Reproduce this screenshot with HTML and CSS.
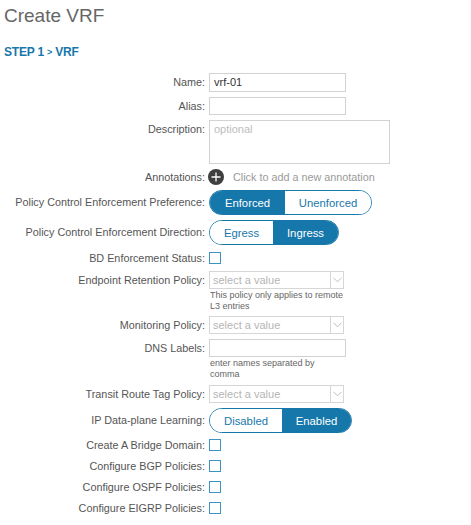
FILE: index.html
```html
<!DOCTYPE html>
<html>
<head>
<meta charset="utf-8">
<link rel="stylesheet" href="styles.css">
</head>
<body>
<div class="page">
  <h1 class="title">Create VRF</h1>
  <div class="step">STEP 1 <span class="sep">&gt;</span> VRF</div>
  <div class="form">
    <div class="row">
      <div class="label h19">Name:</div>
      <div class="ctl"><div class="input h19">vrf-01</div></div>
    </div>
    <div class="row">
      <div class="label h18">Alias:</div>
      <div class="ctl"><div class="input h18"></div></div>
    </div>
    <div class="row">
      <div class="label h18">Description:</div>
      <div class="ctl"><div class="textarea"><span class="ph">optional</span></div></div>
    </div>
    <div class="row r-annot">
      <div class="label h18">Annotations:</div>
      <div class="ctl annot">
        <svg class="plus" width="16" height="16" viewBox="0 0 16 16"><circle cx="8" cy="8" r="8" fill="#3f3f3f"/><path d="M8 3.5v9M3.5 8h9" stroke="#fff" stroke-width="1.3"/></svg>
        <span class="annot-text">Click to add a new annotation</span>
      </div>
    </div>
    <div class="row">
      <div class="label h25">Policy Control Enforcement Preference:</div>
      <div class="ctl">
        <div class="toggle">
          <span class="seg on w75">Enforced</span><span class="seg w87">Unenforced</span>
        </div>
      </div>
    </div>
    <div class="row">
      <div class="label h25">Policy Control Enforcement Direction:</div>
      <div class="ctl">
        <div class="toggle">
          <span class="seg w64">Egress</span><span class="seg on w65">Ingress</span>
        </div>
      </div>
    </div>
    <div class="row">
      <div class="label h16">BD Enforcement Status:</div>
      <div class="ctl cbcell"><span class="cb"></span></div>
    </div>
    <div class="row">
      <div class="label h18">Endpoint Retention Policy:</div>
      <div class="ctl">
        <div class="select"><span class="sel-ph">select a value</span><span class="arrow"><svg width="9" height="6" viewBox="0 0 9 6"><path d="M0.5 0.8l4 4 4-4" fill="none" stroke="#b5b5b5" stroke-width="0.9"/></svg></span></div>
        <div class="help">This policy only applies to remote<br>L3 entries</div>
      </div>
    </div>
    <div class="row r-tight">
      <div class="label h18">Monitoring Policy:</div>
      <div class="ctl">
        <div class="select"><span class="sel-ph">select a value</span><span class="arrow"><svg width="9" height="6" viewBox="0 0 9 6"><path d="M0.5 0.8l4 4 4-4" fill="none" stroke="#b5b5b5" stroke-width="0.9"/></svg></span></div>
      </div>
    </div>
    <div class="row">
      <div class="label h18">DNS Labels:</div>
      <div class="ctl">
        <div class="input h18 w137"></div>
        <div class="help">enter names separated by<br>comma</div>
      </div>
    </div>
    <div class="row">
      <div class="label h18">Transit Route Tag Policy:</div>
      <div class="ctl">
        <div class="select"><span class="sel-ph">select a value</span><span class="arrow"><svg width="9" height="6" viewBox="0 0 9 6"><path d="M0.5 0.8l4 4 4-4" fill="none" stroke="#b5b5b5" stroke-width="0.9"/></svg></span></div>
      </div>
    </div>
    <div class="row">
      <div class="label h25">IP Data-plane Learning:</div>
      <div class="ctl">
        <div class="toggle">
          <span class="seg w72">Disabled</span><span class="seg on w70">Enabled</span>
        </div>
      </div>
    </div>
    <div class="checks">
      <div class="row">
        <div class="label h16">Create A Bridge Domain:</div>
        <div class="ctl cbcell"><span class="cb"></span></div>
      </div>
      <div class="row">
        <div class="label h16">Configure BGP Policies:</div>
        <div class="ctl cbcell"><span class="cb"></span></div>
      </div>
      <div class="row">
        <div class="label h16">Configure OSPF Policies:</div>
        <div class="ctl cbcell"><span class="cb"></span></div>
      </div>
      <div class="row">
        <div class="label h16">Configure EIGRP Policies:</div>
        <div class="ctl cbcell"><span class="cb"></span></div>
      </div>
    </div>
  </div>
</div>
</body>
</html>
```
FILE: styles.css
```css
* { box-sizing: border-box; }
html, body {
  margin: 0;
  padding: 0;
  background: #fff;
}
body {
  font-family: "Liberation Sans", Arial, sans-serif;
  color: #555;
}
.page {
  width: 471px;
  height: 525px;
  overflow: hidden;
  padding: 4px 0 0 4px;
}
.title {
  margin: 0;
  font-size: 19px;
  font-weight: normal;
  color: #666;
  line-height: 24px;
  height: 24px;
}
.step {
  margin-top: 17px;
  font-size: 12px;
  font-weight: bold;
  color: #1677aa;
  line-height: 14px;
  letter-spacing: -0.2px;
}
.step .sep {
  font-size: 9px;
  position: relative;
  top: -1px;
}
.form {
  margin-top: 13px;
  margin-left: -4px;
  display: flex;
  flex-direction: column;
  gap: 5px;
}
.row {
  display: grid;
  grid-template-columns: 205px auto;
  column-gap: 4px;
  align-items: start;
}
.r-annot { margin-top: -1px; margin-bottom: -1px; }
.r-tight { margin-top: -1px; }
.label {
  text-align: right;
  font-size: 10.8px;
  color: #555;
  white-space: nowrap;
}
.h19 { line-height: 19px; }
.h18 { line-height: 18px; }
.h25 { line-height: 25px; }
.h16 { line-height: 16px; }
.ctl { display: block; }
.input {
  width: 137px;
  border: 1px solid #d2d2d2;
  font-size: 11px;
  color: #333;
  padding: 0 4px;
}
.input.h19 { height: 19px; line-height: 17px; }
.input.h18 { height: 18px; line-height: 16px; }
.textarea {
  width: 181px;
  height: 44px;
  border: 1px solid #d2d2d2;
  padding: 1px 4px;
  font-size: 11px;
  line-height: 14px;
}
.ph { color: #bdbdbd; }
.annot {
  display: flex;
  align-items: center;
  height: 18px;
}
.plus { display: block; flex: none; margin-left: -1px; }
.annot-text {
  margin-left: 9px;
  font-size: 10.8px;
  color: #9a9a9a;
}
.toggle {
  display: inline-flex;
  height: 25px;
  border: 1px solid #1677aa;
  border-radius: 13px;
  overflow: hidden;
}
.seg {
  display: flex;
  align-items: center;
  justify-content: center;
  font-size: 11.3px;
  color: #1677aa;
  background: #fff;
}
.seg.on {
  background: #1677aa;
  color: #fff;
}
.w75 { width: 75px; }
.w87 { width: 86px; }
.w64 { width: 63px; }
.w65 { width: 65px; }
.w72 { width: 72px; }
.w70 { width: 69px; }
.cbcell {
  height: 16px;
  display: flex;
  align-items: center;
}
.cb {
  display: block;
  width: 12px;
  height: 12px;
  border: 1px solid #3f93c4;
  background: #fff;
}
.select {
  width: 135px;
  height: 18px;
  border: 1px solid #d6d6d6;
  display: flex;
  align-items: stretch;
}
.sel-ph {
  flex: 1;
  font-size: 11px;
  color: #b5b5b5;
  line-height: 16px;
  padding-left: 3px;
}
.arrow {
  width: 13px;
  border-left: 1px solid #d6d6d6;
  display: flex;
  align-items: center;
  justify-content: center;
}
.arrow svg { display: block; }
.help {
  margin-top: 1px;
  font-size: 9px;
  line-height: 11px;
  color: #666;
  padding-left: 1px;
}
.checks {
  display: flex;
  flex-direction: column;
  gap: 5px;
  margin-top: -1px;
}
```
